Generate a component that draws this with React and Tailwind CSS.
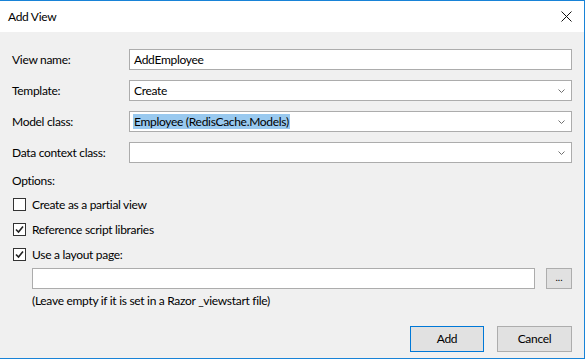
import React from "react";

function Chevron() {
  return (
    <svg width="7" height="4" viewBox="0 0 7 4" className="shrink-0">
      <path d="M0.5 0.5 L3.5 3.5 L6.5 0.5" fill="none" stroke="#707070" strokeWidth="1" />
    </svg>
  );
}

function Field({ label, value, combo, selected }) {
  return (
    <div className="flex items-center h-[21px]">
      <div className="w-[117px] shrink-0 text-[12px] text-black">{label}</div>
      <div className="flex items-center w-[443px] h-[21px] bg-white border border-[#acacac] pl-[3px] pr-[6px]">
        <div className="flex-1 text-[12px] leading-[15px] text-black">
          {value && (
            <span className={selected ? "bg-[#99c9ef] px-[1px]" : "px-[1px]"}>{value}</span>
          )}
        </div>
        {combo && <Chevron />}
      </div>
    </div>
  );
}

function Check({ checked, label }) {
  return (
    <div className="flex items-center h-[15px] gap-[6px]">
      <div className="w-[13px] h-[13px] ml-[1px] border border-[#333333] bg-white flex items-center justify-center">
        {checked && (
          <svg width="11" height="11" viewBox="0 0 11 11">
            <path d="M2 5.5 L4.5 8 L9 2.5" fill="none" stroke="#222" strokeWidth="1.6" />
          </svg>
        )}
      </div>
      <span className="text-[12px] text-black">{label}</span>
    </div>
  );
}

export default function App() {
  return (
    <div
      className="w-[588px] h-[360px] bg-white tracking-[-0.3px]"
      style={{ fontFamily: 'Lato, "Noto Sans", sans-serif' }}
    >
      <div className="w-[585px] h-[359px] flex flex-col border-t border-r border-b border-[#1883d7]">
        <div className="h-[31px] bg-white flex items-center justify-between pl-[8px] pr-[12px] shrink-0">
          <span className="text-[12px] text-black">Add View</span>
          <svg width="11" height="11" viewBox="0 0 11 11">
            <path d="M0.5 0.5 L10.5 10.5 M10.5 0.5 L0.5 10.5" stroke="#111" strokeWidth="1" />
          </svg>
        </div>
        <div className="flex-1 bg-[#f0f0f0] pl-[12px] pt-[17px] flex flex-col">
          <div className="flex flex-col gap-[10px]">
            <Field label="View name:" value="AddEmployee" />
            <Field label="Template:" value="Create" combo />
            <Field label="Model class:" value="Employee (RedisCache.Models)" combo selected />
            <Field label="Data context class:" combo />
          </div>
          <div className="mt-[10px] h-[16px] text-[12px] text-black leading-[16px]">Options:</div>
          <div className="mt-[8px] flex flex-col gap-[10px]">
            <Check label="Create as a partial view" />
            <Check checked label="Reference script libraries" />
            <Check checked label="Use a layout page:" />
          </div>
          <div className="mt-[6px] ml-[20px] flex items-center gap-[11px]">
            <div className="w-[503px] h-[21px] bg-white border border-[#acacac]" />
            <button className="w-[26px] h-[21px] bg-[#e1e1e1] border border-[#adadad] text-[10px] leading-[10px] text-black pb-[3px] tracking-normal">
              ...
            </button>
          </div>
          <div className="mt-[4px] ml-[20px] text-[12px] text-black leading-[16px]">
            (Leave empty if it is set in a Razor _viewstart file)
          </div>
          <div className="mt-[17px] flex justify-end gap-[13px] pr-[12px]">
            <button className="w-[74px] h-[26px] bg-[#e1e1e1] border border-[#0078d7] text-[12px] text-black">
              Add
            </button>
            <button className="w-[75px] h-[26px] bg-[#e1e1e1] border border-[#adadad] text-[12px] text-black">
              Cancel
            </button>
          </div>
        </div>
      </div>
    </div>
  );
}
